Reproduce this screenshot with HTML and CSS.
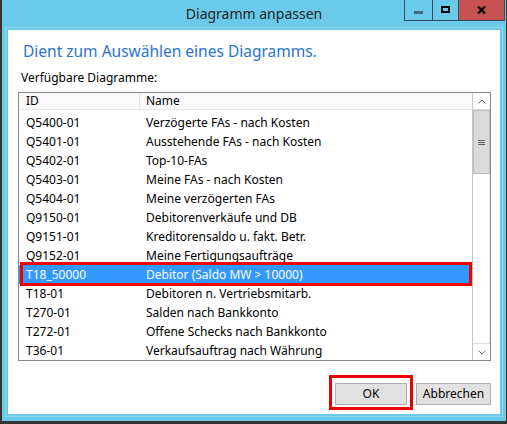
FILE: index.html
```html
<!DOCTYPE html>
<html lang="de">
<head>
<meta charset="utf-8">
<title>Diagramm anpassen</title>
<link rel="stylesheet" href="styles.css">
</head>
<body>
<div class="window">
  <div class="titlebar">
    <div class="tb-spacer"></div>
    <div class="title">Diagramm anpassen</div>
    <div class="controls">
      <div class="ctl ctl-min"><span class="min-glyph"></span></div>
      <div class="ctl ctl-max"><span class="max-glyph"></span></div>
      <div class="ctl ctl-close">
        <svg width="9" height="8" viewBox="0 0 9 8"><path d="M1 0.5 L8 7.5 M8 0.5 L1 7.5" stroke="#000" stroke-width="2.2" fill="none"/></svg>
      </div>
    </div>
  </div>
  <div class="client">
    <h1 class="instruction">Dient zum Auswählen eines Diagramms.</h1>
    <div class="label">Verfügbare Diagramme:</div>
    <div class="listbox">
      <div class="list">
        <div class="header">
          <div class="h-id">ID</div>
          <div class="h-name">Name</div>
        </div>
        <div class="rows">
          <div class="row"><span class="c-id">Q5400-01</span><span class="c-name">Verzögerte FAs - nach Kosten</span></div>
          <div class="row"><span class="c-id">Q5401-01</span><span class="c-name">Ausstehende FAs - nach Kosten</span></div>
          <div class="row"><span class="c-id">Q5402-01</span><span class="c-name">Top-10-FAs</span></div>
          <div class="row"><span class="c-id">Q5403-01</span><span class="c-name">Meine FAs - nach Kosten</span></div>
          <div class="row"><span class="c-id">Q5404-01</span><span class="c-name">Meine verzögerten FAs</span></div>
          <div class="row"><span class="c-id">Q9150-01</span><span class="c-name">Debitorenverkäufe und DB</span></div>
          <div class="row"><span class="c-id">Q9151-01</span><span class="c-name">Kreditorensaldo u. fakt. Betr.</span></div>
          <div class="row"><span class="c-id">Q9152-01</span><span class="c-name">Meine Fertigungsaufträge</span></div>
          <div class="row selected"><span class="c-id">T18_50000</span><span class="c-name">Debitor (Saldo MW &gt; 10000)</span></div>
          <div class="row"><span class="c-id">T18-01</span><span class="c-name">Debitoren n. Vertriebsmitarb.</span></div>
          <div class="row"><span class="c-id">T270-01</span><span class="c-name">Salden nach Bankkonto</span></div>
          <div class="row"><span class="c-id">T272-01</span><span class="c-name">Offene Schecks nach Bankkonto</span></div>
          <div class="row"><span class="c-id">T36-01</span><span class="c-name">Verkaufsauftrag nach Währung</span></div>
        </div>
      </div>
      <div class="scrollbar">
        <div class="sb-btn">
          <svg width="8" height="5" viewBox="0 0 8 5"><path d="M0.5 4.5 L4 1 L7.5 4.5" stroke="#606060" stroke-width="1" fill="none"/></svg>
        </div>
        <div class="sb-thumb"><span class="grip"></span></div>
        <div class="sb-track"></div>
        <div class="sb-btn">
          <svg width="8" height="5" viewBox="0 0 8 5"><path d="M0.5 0.5 L4 4 L7.5 0.5" stroke="#808080" stroke-width="1" fill="none"/></svg>
        </div>
      </div>
    </div>
    <div class="buttons">
      <div class="mark"><button class="btn">OK</button></div>
      <button class="btn">Abbrechen</button>
    </div>
  </div>
</div>
</body>
</html>
```

FILE: styles.css
```css
* { box-sizing: border-box; }
html, body { margin: 0; padding: 0; }
body {
  width: 507px;
  height: 424px;
  overflow: hidden;
  font-family: "Noto Sans", "DejaVu Sans", sans-serif;
  font-size: 12px;
  color: #000;
}
.window {
  width: 507px;
  height: 424px;
  background: #6bc9ea;
  border-left: 2px solid #343434;
  border-right: 1px solid #343434;
  border-bottom: 3px solid #343434;
  display: flex;
  flex-direction: column;
}
.titlebar {
  height: 30px;
  flex: none;
  display: grid;
  grid-template-columns: 1fr auto 1fr;
  align-items: start;
}
.title {
  font-size: 14px;
  line-height: 20px;
  padding-top: 4px;
  color: #1c2329;
  white-space: nowrap;
}
.controls {
  justify-self: end;
  display: flex;
  margin-right: 1px;
  height: 21px;
  border-left: 1px solid #2f4e5e;
  border-bottom: 1px solid #2f4e5e;
  border-right: 1px solid #2f4e5e;
}
.ctl {
  height: 20px;
  display: flex;
  align-items: center;
  justify-content: center;
}
.ctl-min { width: 28px; border-right: 1px solid #2f4e5e; }
.ctl-max { width: 26px; border-right: 1px solid #2f4e5e; }
.ctl-close { width: 45px; background: #c75050; }
.min-glyph {
  display: block;
  width: 9px;
  height: 3px;
  margin-top: 4px;
  background: #3e6a7c;
}
.max-glyph {
  display: block;
  width: 9px;
  height: 7px;
  border: 2px solid #000;
  margin-top: -1px;
}
.ctl-close svg { display: block; margin-top: -1px; }

.client {
  flex: 1;
  margin: 0 6px 7px 6px;
  background: #fff;
  box-shadow: 0 0 0 2px #6bc9ea, 0 0 0 3px #8ed8f1;
  padding: 11px 9px 9px 10px;
  display: flex;
  flex-direction: column;
}
.instruction {
  margin: 0 0 0 5px;
  font-weight: normal;
  font-size: 15.5px;
  line-height: 20px;
  color: #2b74d1;
}
.label {
  margin: 9px 0 0 3px;
  line-height: 16px;
}
.listbox {
  margin-top: 6px;
  height: 269px;
  width: 473px;
  border: 1px solid #828790;
  display: flex;
}
.list {
  flex: 1;
  min-width: 0;
  display: flex;
  flex-direction: column;
}
.header {
  height: 17px;
  display: flex;
  background: #fafafa;
  border-bottom: 1px solid #e5e5e5;
  line-height: 16px;
}
.h-id {
  width: 121px;
  padding-left: 7px;
  border-right: 1px solid #e5e5e5;
}
.h-name {
  flex: 1;
  padding-left: 6px;
}
.rows {
  padding-top: 3px;
}
.row {
  height: 19px;
  line-height: 19px;
  display: flex;
  white-space: nowrap;
  position: relative;
}
.c-id {
  width: 127px;
  padding-left: 7px;
}
.c-name { flex: 1; }
.row.selected {
  background: #3399ff;
  color: #fff;
}
.row.selected::after {
  content: "";
  position: absolute;
  left: 1px;
  right: 0;
  top: -3px;
  bottom: -2px;
  border: 3px solid #ee0000;
  z-index: 2;
}
.scrollbar {
  width: 18px;
  flex: none;
  display: flex;
  flex-direction: column;
  border-left: 1px solid #c7c7c7;
  background: #fff;
}
.sb-btn {
  height: 17px;
  flex: none;
  display: flex;
  align-items: center;
  justify-content: center;
  border-bottom: 1px solid #dcdcdc;
}
.sb-btn:last-child {
  border-bottom: none;
  border-top: 1px solid #dcdcdc;
}
.sb-thumb {
  height: 64px;
  flex: none;
  background: #dadada;
  border: 1px solid #bdbdbd;
  display: flex;
  align-items: center;
  justify-content: center;
}
.grip {
  display: block;
  width: 7px;
  height: 5px;
  border-top: 1px solid #606060;
  border-bottom: 1px solid #606060;
  background: linear-gradient(#606060, #606060) center / 7px 1px no-repeat;
}
.sb-track {
  flex: 1;
  background: #fff;
  border-right: 1px solid #f0f0f0;
}
.buttons {
  margin-top: auto;
  display: flex;
  justify-content: flex-end;
  gap: 9px;
}
.mark {
  margin: -8px -6px -5px -6px;
  padding: 5px 3px 2px 3px;
  border: 3px solid #ee0000;
  display: flex;
}
.btn {
  font-family: inherit;
  font-size: 12px;
  color: #000;
  height: 22px;
  width: 72px;
  padding: 0;
  background: #e1e1e1;
  border: 1px solid #adadad;
  border-radius: 0;
  line-height: 18px;
}
.buttons > .btn { width: 75px; }
```
